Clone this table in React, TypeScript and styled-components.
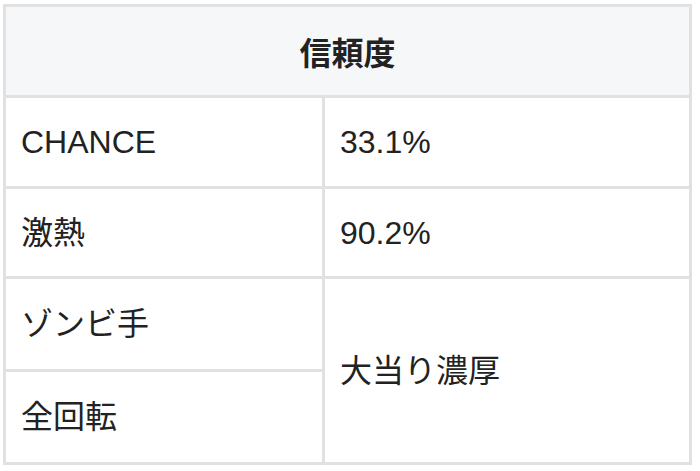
import React from "react";
import styled, { createGlobalStyle } from "styled-components";

const GlobalStyle = createGlobalStyle`
  html, body {
    margin: 0;
    padding: 0;
    background: #ffffff;
  }
  body {
    font-family: "Liberation Sans", "Noto Sans CJK JP", sans-serif;
    color: #222222;
  }
`;

const Page = styled.div`
  padding: 4px 8px 6px 3px;
  width: 689px;
`;

const Grid = styled.div`
  display: grid;
  grid-template-columns: 316px 364px;
  grid-template-rows: 88px 88px 87px 90px 90px;
  gap: 3px;
  padding: 3px;
  background: #e1e1e1;
`;

const HeaderCell = styled.div`
  grid-column: 1 / span 2;
  background: #f6f7f9;
  display: flex;
  align-items: center;
  justify-content: center;
  font-size: 32px;
  font-weight: 700;
  font-family: "Noto Sans CJK JP", "Liberation Sans", sans-serif;
`;

const Cell = styled.div<{ $span?: number }>`
  background: #ffffff;
  display: flex;
  align-items: center;
  padding: 0 15px;
  font-size: 32px;
  line-height: 1;
  ${(p) => (p.$span ? `grid-row: span ${p.$span};` : "")}
`;

const rows: { label: string; value?: string; span?: number }[] = [
  { label: "CHANCE", value: "33.1%" },
  { label: "激熱", value: "90.2%" },
  { label: "ゾンビ手", value: "大当り濃厚", span: 2 },
  { label: "全回転" },
];

export default function App() {
  return (
    <>
      <GlobalStyle />
      <Page>
        <Grid>
          <HeaderCell>信頼度</HeaderCell>
          {rows.map((r) => (
            <React.Fragment key={r.label}>
              <Cell>{r.label}</Cell>
              {r.value !== undefined && <Cell $span={r.span}>{r.value}</Cell>}
            </React.Fragment>
          ))}
        </Grid>
      </Page>
    </>
  );
}
